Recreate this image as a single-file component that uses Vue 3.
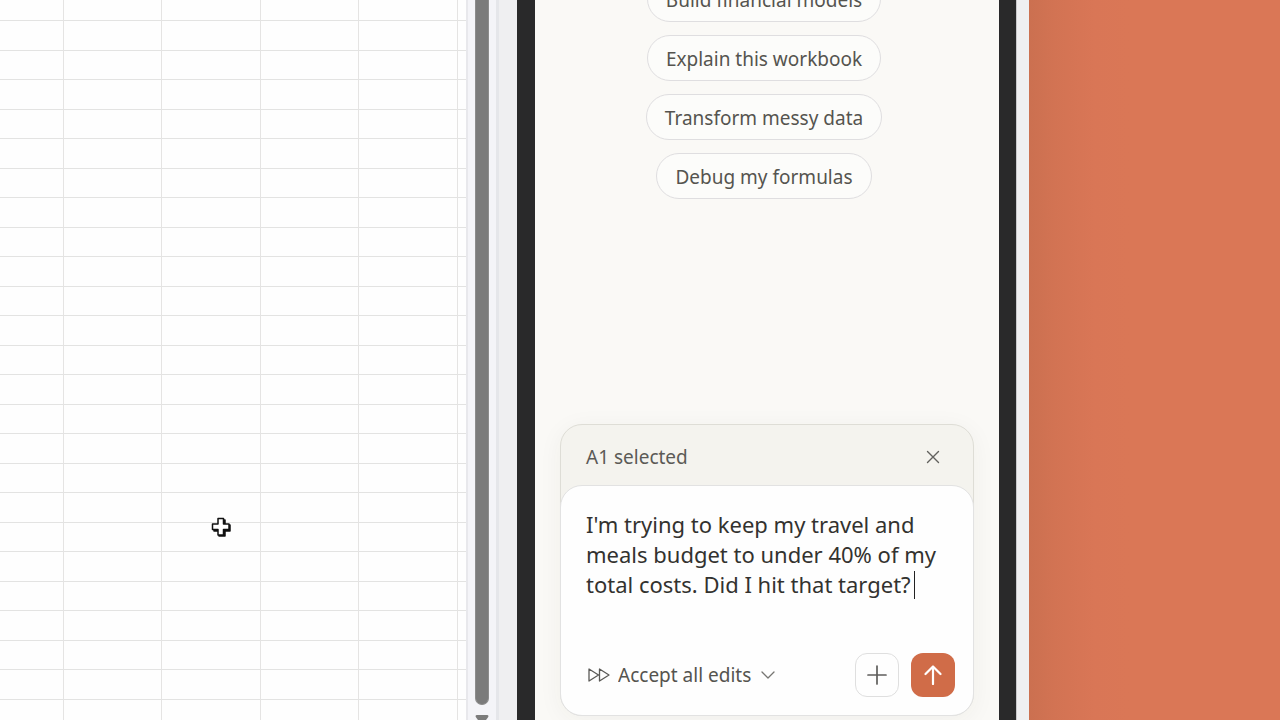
<script setup>
import { ref } from 'vue'

const suggestions = ref([
  'Build financial models',
  'Explain this workbook',
  'Transform messy data',
  'Debug my formulas'
])
const prompt = ref(
  "I'm trying to keep my travel and meals budget to under 40% of my total costs. Did I hit that target?"
)
const mode = ref('accept')
const showSelection = ref(true)
const rows = 25
const columns = 6
</script>

<template>
  <main class="desktop">
    <section class="sheet" aria-label="Worksheet">
      <table class="grid">
        <tbody>
          <tr v-for="r in rows" :key="r">
            <td v-for="c in columns" :key="c"></td>
          </tr>
        </tbody>
      </table>
      <svg class="cell-cursor" viewBox="0 0 22 22" aria-hidden="true">
        <path d="M9 4h6v5h5v6h-5v5H9v-5H4V9h5z" fill="#111" stroke="#111" stroke-width="1.5" stroke-linejoin="round" />
        <path d="M8 2.500h5.500v5.500H19v5.500h-5.500V19H8v-5.500H2.500V8H8z" fill="#fff" stroke="#111" stroke-width="1.5" stroke-linejoin="round" />
      </svg>
    </section>
    <div class="scrollbar" aria-hidden="true">
      <div class="thumb"></div>
      <svg class="arrow" viewBox="0 0 14 10"><path d="M2 0h10q2 0 1.200 2L8.500 8.500q-1.500 1.500-3 0L.8 2Q0 0 2 0z" fill="#7b7b7b" /></svg>
    </div>
    <div class="splitter"></div>
    <section class="assistant" aria-label="Assistant">
      <div class="suggestions">
        <button v-for="s in suggestions" :key="s" type="button" class="pill" @click="prompt = s">{{ s }}</button>
      </div>
      <form class="composer" @submit.prevent>
        <div v-if="showSelection" class="selection">
          <span>A1 selected</span>
          <button type="button" class="close" aria-label="Clear selection" @click="showSelection = false">
            <svg viewBox="0 0 14 14"><path d="M1.500 1.500l11 11M12.500 1.500l-11 11" /></svg>
          </button>
        </div>
        <div class="card">
          <div class="field">
            <textarea v-model="prompt" rows="3" aria-label="Message" spellcheck="false"></textarea>
            <span class="caret"></span>
          </div>
          <div class="actions">
            <label class="mode">
              <svg class="forward" viewBox="0 0 22 14"><path d="M1 1v12L10.500 7zM11.500 1v12L21 7z" /></svg>
              <select v-model="mode" aria-label="Edit mode">
                <option value="accept">Accept all edits</option>
                <option value="ask">Ask before edits</option>
              </select>
              <svg class="chevron" viewBox="0 0 14 8"><path d="M1 1l6 6 6-6" /></svg>
            </label>
            <button type="button" class="square" aria-label="Add">
              <svg viewBox="0 0 20 20"><path d="M10 1v18M1 10h18" /></svg>
            </button>
            <button type="submit" class="square send" aria-label="Send">
              <svg viewBox="0 0 20 20"><path d="M10 19V1.500M2.500 9L10 1.500 17.500 9" /></svg>
            </button>
          </div>
        </div>
      </form>
    </section>
    <div class="edge"></div>
    <div class="backdrop"></div>
  </main>
</template>

<style>
body {
  background: #da7756;
}
</style>

<style scoped>
.desktop {
  display: flex;
  height: 100vh;
  overflow: hidden;
  font-family: "Noto Sans", sans-serif;
}
.desktop *,
.desktop *::before {
  box-sizing: border-box;
}
button,
select,
textarea {
  font: inherit;
  color: inherit;
  border: 0;
  padding: 0;
  background: none;
}
svg {
  display: block;
  fill: none;
  stroke-linecap: round;
  stroke-linejoin: round;
}
.sheet {
  position: relative;
  flex: 1;
  min-width: 0;
  overflow: hidden;
  background: #fefefe;
}
.grid {
  width: 100%;
  table-layout: fixed;
  border-collapse: separate;
  border-spacing: 0;
}
.grid tr {
  height: 29px;
}
.grid tr:nth-child(even) {
  height: 30px;
}
.grid tr:first-child {
  height: 21px;
}
.grid td {
  width: 98px;
  padding: 0;
  border-right: 1px solid #e5e4e3;
  border-bottom: 1px solid #e3e3e2;
}
.grid td:first-child {
  width: 64px;
}
.grid td:nth-child(3),
.grid td:nth-child(5) {
  width: 99px;
}
.grid td:last-child {
  width: auto;
  border-right: 0;
}
.cell-cursor {
  position: absolute;
  left: 210px;
  top: 516px;
  width: 22px;
  height: 22px;
}
.scrollbar {
  display: flex;
  flex-direction: column;
  align-items: center;
  gap: 10px;
  width: 30px;
  border-left: 2px solid #e8e8ec;
  background: #f4f4f8;
}
.thumb {
  flex: 1;
  width: 14px;
  border: 1px solid #8c8c8c;
  border-top: 0;
  border-radius: 0 0 7px 7px;
  background: #7b7b7b;
}
.arrow {
  width: 14px;
  height: 10px;
  margin-bottom: -5px;
}
.splitter {
  width: 21px;
  border-left: 3px solid #e5e6ea;
  background: #efeff1;
}
.assistant {
  display: flex;
  flex-direction: column;
  justify-content: space-between;
  width: 499px;
  padding: 0 25px 4px;
  border: solid #29292a;
  border-width: 0 17px 0 18px;
  background: #faf9f6;
}
.suggestions {
  display: flex;
  flex-direction: column;
  align-items: center;
  gap: 13px;
  margin-top: -24px;
  padding-right: 6px;
}
.pill {
  height: 46px;
  padding: 1px 18px 0;
  border: 1px solid #dfdee0;
  border-radius: 23px;
  background: #fcfcfa;
  color: #55544f;
  font-size: 19px;
  line-height: 26px;
}
.composer {
  border: 1px solid #deddd6;
  border-radius: 22px;
  background: #f4f3ee;
  box-shadow: 0 4px 24px rgba(60, 55, 40, 0.05);
}
.selection {
  display: flex;
  align-items: center;
  justify-content: space-between;
  height: 60px;
  padding: 4px 32px 0 25px;
  color: #5b5a56;
  font-size: 19px;
}
.close {
  padding: 1px;
}
.close svg {
  width: 14px;
  height: 14px;
  stroke: #62615e;
  stroke-width: 1.4;
}
.card {
  margin: 0 -1px -1px;
  padding: 23px 18px 18px 25px;
  border: 1px solid #e2e2e2;
  border-radius: 22px;
  background: #fefefe;
}
.field {
  position: relative;
}
textarea {
  display: block;
  width: 100%;
  height: 90px;
  overflow: hidden;
  resize: none;
  outline: 0;
  color: #33322f;
  font-size: 22px;
  line-height: 30px;
}
.caret {
  position: absolute;
  left: 328px;
  top: 62px;
  width: 1px;
  height: 28px;
  background: #222;
}
.actions {
  display: flex;
  align-items: center;
  gap: 12px;
  margin-top: 54px;
}
.mode {
  display: flex;
  align-items: center;
  gap: 8px;
  margin-right: auto;
  padding-left: 2px;
  color: #55544f;
  font-size: 19px;
}
select {
  width: 135px;
  height: 30px;
  appearance: none;
  outline: 0;
}
.forward {
  width: 22px;
  height: 14px;
  stroke: #5b5a57;
  stroke-width: 1.3;
}
.chevron {
  width: 14px;
  height: 8px;
  stroke: #777673;
  stroke-width: 1.3;
}
.square {
  display: grid;
  place-items: center;
  width: 44px;
  height: 44px;
  border: 1px solid #dfdfdf;
  border-radius: 12px;
}
.square svg {
  width: 20px;
  height: 20px;
  stroke: #5f5e5c;
  stroke-width: 1.7;
}
.send {
  border: 0;
  background: #d06c48;
}
.send svg {
  stroke: #fff;
  stroke-width: 2.2;
}
.edge {
  width: 13px;
  border-left: 1px solid #c9c9cb;
  background: #efeff1;
}
.backdrop {
  width: 251px;
  background: linear-gradient(90deg, #cb7050 0, #d27353 25px, #d97656 65px, #da7756 100px);
}
</style>
